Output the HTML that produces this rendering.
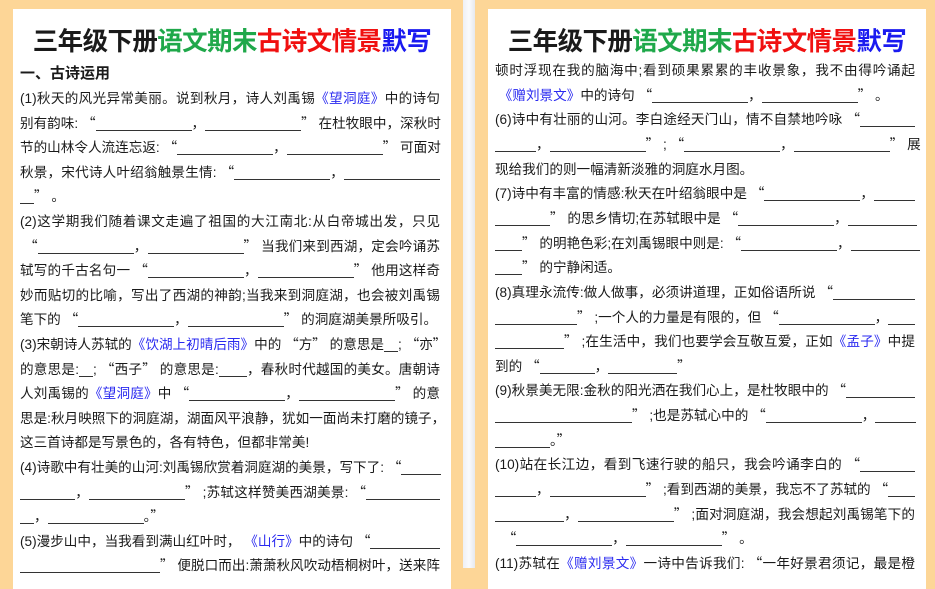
<!DOCTYPE html>
<html><head><meta charset="utf-8"><style>
*{margin:0;padding:0;box-sizing:border-box}
body{width:935px;height:568px;overflow:hidden;background:#fdd697;position:relative;font-family:"Liberation Sans","Noto Sans CJK SC",sans-serif;color:#1a1a1a}
.gap{position:absolute;left:463px;top:0;width:12px;height:568px;background:linear-gradient(90deg,#eef0f5,#fafbfd 50%,#e6e8ee)}
.card{position:absolute;top:9px;width:438px;height:580px;background:#fff}
.title{position:absolute;top:11px;width:100%;text-align:center;font-size:25.5px;font-weight:bold;line-height:40px;letter-spacing:-0.6px;font-family:"Noto Sans CJK SC",sans-serif}
.g{color:#1fa84a}.r{color:#f01010}.bl{color:#1a1af0}
.h{position:absolute;left:7px;top:52px;font-size:15px;font-weight:bold;line-height:24px;font-family:"Noto Sans CJK SC",sans-serif}
.ln{position:absolute;font-size:13.6px;line-height:24px;height:24px;white-space:nowrap;width:420px}
.q{font-family:"Noto Sans CJK SC",sans-serif;line-height:1}
.j{text-align:justify;text-align-last:justify}
.b{color:#2a2af0}
.u{display:inline-block;border-bottom:1px solid #333;height:14px;vertical-align:-3px}
</style></head><body>
<div class="gap"></div>
<div class="card" style="left:13px">
<div class="title">三年级下册<span class="g">语文期末</span><span class="r">古诗文情景</span><span class="bl">默写</span></div>
<div class="h">一、古诗运用</div>
</div>
<div class="card" style="left:488px">
<div class="title">三年级下册<span class="g">语文期末</span><span class="r">古诗文情景</span><span class="bl">默写</span></div>
</div>
<div id="L"></div>
<script>
var U=function(w){return '<span class="u" style="width:'+w+'px"></span>'};
var L=[
['j','(1)秋天的风光异常美丽。说到秋月，诗人刘禹锡<span class="b">《望洞庭》</span>中的诗句'],
['j','别有韵味: “'+U(96)+'，'+U(96)+'” 在杜牧眼中，深秋时'],
['j','节的山林令人流连忘返: “'+U(96)+'，'+U(96)+'” 可面对'],
['j','秋景，宋代诗人叶绍翁触景生情: “'+U(96)+'，'+U(96)],
['',U(14)+'” 。'],
['j','(2)这学期我们随着课文走遍了祖国的大江南北:从白帝城出发，只见'],
['j','&nbsp;“'+U(96)+'，'+U(96)+'” 当我们来到西湖，定会吟诵苏'],
['j','轼写的千古名句一 “'+U(96)+'，'+U(96)+'” 他用这样奇'],
['j','妙而贴切的比喻，写出了西湖的神韵;当我来到洞庭湖，也会被刘禹锡'],
['','笔下的 “'+U(96)+'，'+U(96)+'” 的洞庭湖美景所吸引。'],
['j','(3)宋朝诗人苏轼的<span class="b">《饮湖上初晴后雨》</span>中的 “方” 的意思是'+U(14)+'; “亦”'],
['j','的意思是:'+U(14)+'; “西子” 的意思是:'+U(28)+'，春秋时代越国的美女。唐朝诗'],
['j','人刘禹锡的<span class="b">《望洞庭》</span>中 “'+U(96)+'，'+U(96)+'” 的意'],
['j','思是:秋月映照下的洞庭湖，湖面风平浪静，犹如一面尚未打磨的镜子，'],
['','这三首诗都是写景色的，各有特色，但都非常美!'],
['j','(4)诗歌中有壮美的山河:刘禹锡欣赏着洞庭湖的美景，写下了: “'+U(40)],
['j',U(55)+'，'+U(96)+'” ;苏轼这样赞美西湖美景: “'+U(74)],
['',U(14)+'，'+U(96)+'。”'],
['j','(5)漫步山中，当我看到满山红叶时， <span class="b">《山行》</span>中的诗句 “'+U(70)],
['j',U(140)+'” 便脱口而出:萧萧秋风吹动梧桐树叶，送来阵']
];
var R=[
['j','顿时浮现在我的脑海中;看到硕果累累的丰收景象，我不由得吟诵起'],
['','&nbsp;<span class="b">《赠刘景文》</span>中的诗句 “'+U(96)+'，'+U(96)+'” 。'],
['j','(6)诗中有壮丽的山河。李白途经天门山，情不自禁地吟咏 “'+U(55)],
['j',U(41)+'，'+U(96)+'” ; “'+U(96)+'，'+U(96)+'” 展'],
['','现给我们的则一幅清新淡雅的洞庭水月图。'],
['j','(7)诗中有丰富的情感:秋天在叶绍翁眼中是 “'+U(96)+'，'+U(41)],
['j',U(55)+'” 的思乡情切;在苏轼眼中是 “'+U(96)+'，'+U(69)],
['j',U(27)+'” 的明艳色彩;在刘禹锡眼中则是: “'+U(96)+'，'+U(69)],
['',U(27)+'” 的宁静闲适。'],
['j','(8)真理永流传:做人做事，必须讲道理，正如俗语所说 “'+U(82)],
['j',U(82)+'” ;一个人的力量是有限的，但 “'+U(96)+'，'+U(27)],
['j',U(69)+'” ;在生活中，我们也要学会互敬互爱，正如<span class="b">《孟子》</span>中提'],
['','到的 “'+U(55)+'，'+U(69)+'”'],
['j','(9)秋景美无限:金秋的阳光洒在我们心上，是杜牧眼中的 “'+U(69)],
['j',U(137)+'” ;也是苏轼心中的 “'+U(96)+'，'+U(41)],
['',U(55)+'。”'],
['j','(10)站在长江边，看到飞速行驶的船只，我会吟诵李白的 “'+U(55)],
['j',U(41)+'，'+U(96)+'” ;看到西湖的美景，我忘不了苏轼的 “'+U(27)],
['j',U(69)+'，'+U(96)+'” ;面对洞庭湖，我会想起刘禹锡笔下的'],
['','&nbsp;&nbsp;“'+U(96)+'，'+U(96)+'” 。'],
['j','(11)苏轼在<span class="b">《赠刘景文》</span>一诗中告诉我们: “一年好景君须记，最是橙']
];
function fix(s){return s.replace(/[“”]/g,function(c){return '<span class="q">'+c+'</span>'})}
var h='';
L.forEach(function(l,i){h+='<div class="ln '+l[0]+'" style="left:20px;top:'+(87+i*24.6)+'px">'+fix(l[1])+'</div>'});
R.forEach(function(l,i){h+='<div class="ln '+l[0]+'" style="left:495px;top:'+(59+i*24.65)+'px">'+fix(l[1])+'</div>'});
document.getElementById('L').innerHTML=h;
</script>
</body></html>
